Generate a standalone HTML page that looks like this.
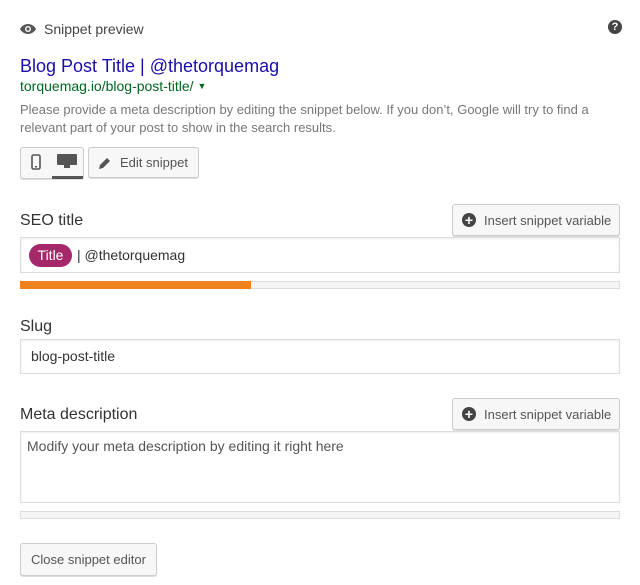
<!DOCTYPE html>
<html><head><meta charset="utf-8"><style>
*{box-sizing:border-box;margin:0;padding:0}
body{width:640px;height:585px;background:#fff;font-family:"Liberation Sans",Arial,sans-serif;position:relative;overflow:hidden;color:#444}
.a{position:absolute;white-space:nowrap}
.btn{position:absolute;background:#f7f7f7;border:1px solid #ccc;border-radius:3px;box-shadow:0 1px 0 #ddd;color:#555;font-size:14px}
.inp{position:absolute;border:1px solid #ddd;background:#fff;box-shadow:inset 0 1px 2px rgba(0,0,0,.07)}
.lbl{font-size:16px;color:#333}
.bt{font-size:13px;color:#555}
.bar{position:absolute;left:20px;width:600px;height:8px;background:#f5f5f5;border:1px solid #ddd}
</style></head><body>
<svg class="a" style="left:19px;top:22px" width="18" height="14" viewBox="0 0 18 14"><path d="M9 2C5 2 2 5 1 7c1 2 4 5 8 5s7-3 8-5c-1-2-4-5-8-5z" fill="#555"/><circle cx="9" cy="7" r="3" fill="#fff"/><circle cx="9" cy="7" r="1.6" fill="#555"/></svg>
<div class="a" style="left:44px;top:21px;font-size:14px;color:#444">Snippet preview</div>
<div class="a" style="left:608px;top:20px;width:14px;height:14px;border-radius:50%;background:#444;color:#fff;font-size:11px;font-weight:bold;text-align:center;line-height:14px">?</div>
<div class="a" style="left:20px;top:56px;font-size:18px;color:#1a0dab">Blog Post Title | @thetorquemag</div>
<div class="a" style="left:20px;top:78px;font-size:14px;color:#006621">torquemag.io/blog-post-title/ <span style="font-size:9px;position:relative;top:-2px">&#9660;</span></div>
<div class="a" style="left:20px;top:101px;font-size:13px;color:#777;line-height:18px;white-space:normal;width:610px">Please provide a meta description by editing the snippet below. If you don’t, Google will try to find a relevant part of your post to show in the search results.</div>
<div class="btn" style="left:20px;top:147px;width:64px;height:32px"></div>
<svg class="a" style="left:31px;top:154px" width="10" height="16" viewBox="0 0 10 16"><rect x="1" y="1" width="8" height="14" rx="1.5" fill="none" stroke="#555" stroke-width="1.6"/><rect x="4" y="12" width="2" height="1.5" fill="#555"/></svg>
<svg class="a" style="left:56px;top:153px" width="22" height="16" viewBox="0 0 22 16"><rect x="1" y="1" width="20" height="11" rx="1" fill="#555"/><rect x="8" y="12" width="6" height="3" fill="#555"/></svg>
<div class="a" style="left:52px;top:176px;width:31px;height:3px;background:#555"></div>
<div class="btn" style="left:88px;top:147px;width:111px;height:31px"></div>
<svg class="a" style="left:98px;top:156px" width="14" height="14" viewBox="0 0 14 14"><path d="M1 13l1-4 7-7 3 3-7 7z" fill="#555"/></svg>
<div class="a bt" style="left:120px;top:155px">Edit snippet</div>

<div class="a lbl" style="left:20px;top:212px">SEO title</div>
<div class="btn" style="left:452px;top:204px;width:168px;height:32px"></div>
<div class="a" style="left:462px;top:213px;width:14px;height:14px;border-radius:50%;background:#444;color:#fff;font-size:14px;font-weight:bold;text-align:center;line-height:14px">+</div>
<div class="a bt" style="left:484px;top:213px">Insert snippet variable</div>
<div class="inp" style="left:20px;top:237px;width:600px;height:36px"></div>
<div class="a" style="left:29px;top:244px;width:43px;height:23px;border-radius:12px;background:#a4286a;color:#fff;font-size:14px;text-align:center;line-height:23px">Title</div>
<div class="a" style="left:77px;top:247px;font-size:14px;color:#333">| @thetorquemag</div>
<div class="bar" style="top:281px"></div>
<div class="a" style="left:20px;top:281px;width:231px;height:8px;background:#f0821e"></div>

<div class="a lbl" style="left:20px;top:318px">Slug</div>
<div class="inp" style="left:20px;top:339px;width:600px;height:35px"></div>
<div class="a" style="left:31px;top:348px;font-size:14px;color:#333">blog-post-title</div>

<div class="a lbl" style="left:20px;top:406px">Meta description</div>
<div class="btn" style="left:452px;top:398px;width:168px;height:32px"></div>
<div class="a" style="left:462px;top:407px;width:14px;height:14px;border-radius:50%;background:#444;color:#fff;font-size:14px;font-weight:bold;text-align:center;line-height:14px">+</div>
<div class="a bt" style="left:484px;top:407px">Insert snippet variable</div>
<div class="inp" style="left:20px;top:431px;width:600px;height:72px"></div>
<div class="a" style="left:27px;top:438px;font-size:14px;color:#555">Modify your meta description by editing it right here</div>
<div class="bar" style="top:511px"></div>

<div class="btn" style="left:20px;top:543px;width:137px;height:33px"></div>
<div class="a bt" style="left:31px;top:552px">Close snippet editor</div>
</body></html>
